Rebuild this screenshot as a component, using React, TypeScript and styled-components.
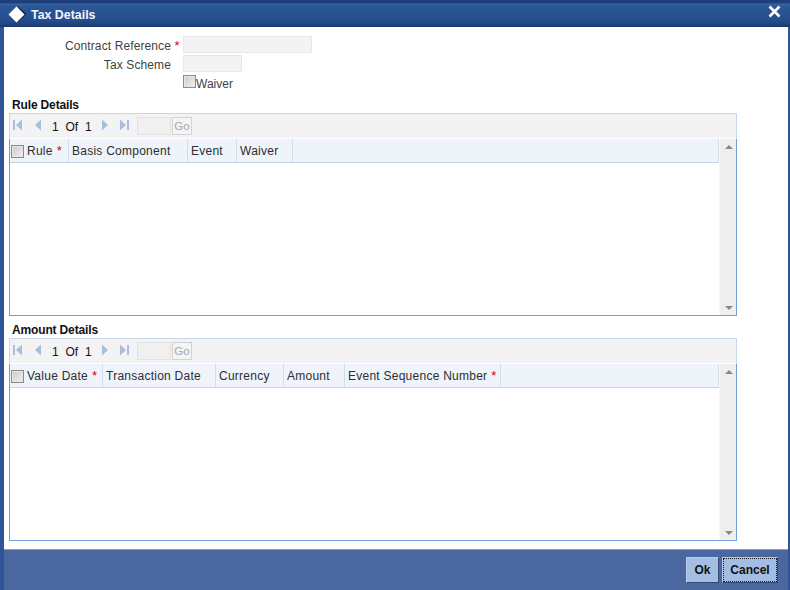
import React from "react";
import styled, { createGlobalStyle } from "styled-components";

const Global = createGlobalStyle`
  html, body { margin: 0; padding: 0; background: #fff; }
  body { font-family: "Liberation Sans", Arial, sans-serif; font-size: 12px; color: #333; }
  * { box-sizing: border-box; }
`;

const Window = styled.div`
  width: 790px;
  height: 590px;
  display: flex;
  flex-direction: column;
  background: #2f5597;
  overflow: hidden;
`;
const TitleBar = styled.div`
  height: 27px;
  flex: none;
  display: flex;
  align-items: center;
  padding: 2px 9px 0 8px;
  background: linear-gradient(#1f3f7c 0, #1f3f7c 3px, #3a66a6 4px, #2c5797 6px, #254d8d 20px, #1d3f78 26px, #16315f 27px);
  color: #fff;
`;
const Title = styled.span`
  font-size: 12.4px;
  font-weight: bold;
  margin-left: 4px;
  color: #f2f5fb;
`;
const Close = styled.svg`
  margin-left: auto;
  width: 13px;
  height: 13px;
  margin-top: -6px;
`;
const Body = styled.div`
  flex: 1;
  margin: 0 2px 0 4px;
  background: #fff;
  display: flex;
  flex-direction: column;
  padding-left: 5px;
`;
const Form = styled.div`
  display: grid;
  grid-template-columns: 162px 12px auto;
  grid-auto-rows: 19px;
  padding-top: 9px;
  height: 70px;
  justify-content: start;
`;
const FieldLabel = styled.label`
  text-align: right;
  line-height: 20px;
  color: #3f3f3f;
  letter-spacing: 0.11px;
`;
const Star = styled.span`
  color: #e00000;
  font-size: 13px;
  line-height: 20px;
  text-align: center;
`;
const TextBox = styled.div<{ $w: number }>`
  width: ${(p) => p.$w}px;
  height: 17px;
  background: #f3f3f3;
  border: 1px solid #e8e8e8;
`;
const WaiverWrap = styled.div`
  grid-column: 3;
  display: flex;
  align-items: flex-start;
  height: 19px;
  padding-top: 1px;
`;
const Check = styled.span`
  display: block;
  flex: none;
  width: 13px;
  height: 13px;
  border: 1px solid #8b8b8b;
  background: linear-gradient(135deg, #c9c9c9, #f2f2f2);
  box-shadow: inset 0 0 0 1px #e6e6e6;
`;
const WaiverText = styled.span`
  line-height: 17px;
  margin-top: 1px;
  color: #3f3f3f;
`;
const SectionTitle = styled.div<{ $gap: number }>`
  height: 14px;
  margin-top: ${(p) => p.$gap}px;
  line-height: 16px;
  padding-left: 3px;
  font-weight: bold;
  letter-spacing: -0.15px;
  color: #111;
`;
const Panel = styled.div`
  width: 728px;
  height: 203px;
  margin-top: 2px;
  flex: none;
  display: flex;
  flex-direction: column;
  border: 1px solid #6f9fd8;
  border-top: 0;
`;
const Toolbar = styled.div`
  height: 26px;
  flex: none;
  margin-left: -1px;
  width: 728px;
  display: flex;
  align-items: center;
  background: #f3f3f3;
  border: 1px solid #c8d6e6;
  border-bottom: 1px solid #fff;
  padding-left: 2px;
`;
const Pager = styled.span`
  font-size: 12px;
  line-height: 16px;
  padding-top: 1px;
  color: #111;
  width: 42px;
  margin-left: 8px;
  margin-right: 6px;
  word-spacing: 3.5px;
  white-space: nowrap;
`;
const NavIcon = styled.svg<{ $ml?: number }>`
  width: 11px;
  height: 12px;
  flex: none;
  margin-left: ${(p) => p.$ml ?? 0}px;
  margin-top: -2px;
`;
const PageBox = styled.div`
  width: 34px;
  height: 18px;
  margin-left: 7px;
  background: #f0f0f0;
  border: 1px solid #e2e2e2;
`;
const GoButton = styled.div`
  width: 20px;
  height: 18px;
  margin-left: 1px;
  border: 1px solid #d2d2d2;
  background: #f4f4f4;
  color: #a8a8a8;
  font-size: 11.5px;
  line-height: 16px;
  text-align: center;
`;
const TableArea = styled.div`
  flex: 1;
  display: flex;
  min-height: 0;
`;
const Grid = styled.div`
  flex: 1;
  min-width: 0;
`;
const HeadRow = styled.div`
  height: 24px;
  display: flex;
  align-items: stretch;
  background: #eff3fa;
  border-bottom: 1px solid #c8d3e3;
  border-right: 1px solid #d5deeb;
`;
const CheckCell = styled.div`
  width: 14px;
  flex: none;
  display: flex;
  align-items: center;
  padding-left: 1px;
  padding-top: 1px;
`;
const HeadCell = styled.div<{ $w: number }>`
  width: ${(p) => p.$w}px;
  flex: none;
  padding-left: 3px;
  line-height: 25px;
  white-space: nowrap;
  color: #2e2e2e;
  letter-spacing: 0.25px;
  border-right: 1px solid #d3dcea;
`;
const HeadStar = styled.span`
  color: #e00000;
  font-size: 13px;
  line-height: 1;
  margin-left: 4px;
`;
const ScrollBar = styled.div`
  width: 17px;
  flex: none;
  display: flex;
  flex-direction: column;
  justify-content: space-between;
  align-items: center;
  padding: 6px 0 5px 1px;
  background: #efefef;
  border-left: 1px solid #f8f8f8;
`;
const Arrow = styled.span<{ $down?: boolean }>`
  display: block;
  width: 0;
  height: 0;
  border-left: 4px solid transparent;
  border-right: 4px solid transparent;
  ${(p) => (p.$down ? "border-top: 4px solid #888;" : "border-bottom: 4px solid #888;")}
`;
const Footer = styled.div`
  height: 41px;
  flex: none;
  margin-left: 4px;
  margin-right: 2px;
  display: flex;
  justify-content: flex-end;
  align-items: flex-start;
  gap: 3px;
  padding: 7px 10px 0 0;
  background: #4a689f;
  border-top: 1px solid #8a9dc0;
`;
const Button = styled.div<{ $w: number; $focus?: boolean }>`
  width: ${(p) => p.$w}px;
  height: 26px;
  background: #a3bde3;
  border: 1px solid;
  border-color: #b9cdea #2f4a78 #2f4a78 #b9cdea;
  color: #111;
  font-weight: bold;
  font-size: 12px;
  display: flex;
  align-items: center;
  justify-content: center;
  ${(p) => (p.$focus ? "outline: 1px dotted #1a1a1a; outline-offset: -2px;" : "")}
`;

const navColor = "#a9bedd";
const First = () => (
  <NavIcon viewBox="0 0 11 12">
    <rect x="1" y="1" width="2" height="10" fill={navColor} />
    <path d="M10 0.5V11.5L4 6Z" fill={navColor} />
  </NavIcon>
);
const Prev = () => (
  <NavIcon $ml={10} viewBox="0 0 11 12">
    <path d="M8 0.5V11.5L2 6Z" fill={navColor} />
  </NavIcon>
);
const Next = () => (
  <NavIcon viewBox="0 0 11 12">
    <path d="M2 0.5V11.5L8 6Z" fill={navColor} />
  </NavIcon>
);
const Last = () => (
  <NavIcon $ml={8} viewBox="0 0 11 12">
    <path d="M1 0.5V11.5L7 6Z" fill={navColor} />
    <rect x="8" y="1" width="2" height="10" fill={navColor} />
  </NavIcon>
);

type Col = { label: string; w: number; req?: boolean };

const TablePanel = ({ cols }: { cols: Col[] }) => (
  <Panel>
    <Toolbar>
      <First />
      <Prev />
      <Pager>1 Of 1</Pager>
      <Next />
      <Last />
      <PageBox />
      <GoButton>Go</GoButton>
    </Toolbar>
    <TableArea>
      <Grid>
        <HeadRow>
          <CheckCell>
            <Check />
          </CheckCell>
          {cols.map((c) => (
            <HeadCell key={c.label} $w={c.w}>
              {c.label}
              {c.req && <HeadStar>*</HeadStar>}
            </HeadCell>
          ))}
        </HeadRow>
      </Grid>
      <ScrollBar>
        <Arrow />
        <Arrow $down />
      </ScrollBar>
    </TableArea>
  </Panel>
);

const ruleCols: Col[] = [
  { label: "Rule", w: 45, req: true },
  { label: "Basis Component", w: 119 },
  { label: "Event", w: 49 },
  { label: "Waiver", w: 56 },
];
const amountCols: Col[] = [
  { label: "Value Date", w: 79, req: true },
  { label: "Transaction Date", w: 113 },
  { label: "Currency", w: 68 },
  { label: "Amount", w: 61 },
  { label: "Event Sequence Number", w: 156, req: true },
];

export default function App() {
  return (
    <Window>
      <Global />
      <TitleBar>
        <svg width="19" height="17" viewBox="0 0 19 17">
          <path d="M10 0.5L18.5 8L10 16Z" fill="#10294f" />
          <path d="M8.5 0.5L16.5 8.5L8.5 16.5L0.5 8.5Z" fill="#fff" />
        </svg>
        <Title>Tax Details</Title>
        <Close viewBox="0 0 13 13">
          <path d="M1.5 1.5L11.5 11.5M11.5 1.5L1.5 11.5" stroke="#fff" strokeWidth="2.6" />
        </Close>
      </TitleBar>
      <Body>
        <Form>
          <FieldLabel>Contract Reference</FieldLabel>
          <Star>*</Star>
          <TextBox $w={129} />
          <FieldLabel>Tax Scheme</FieldLabel>
          <span />
          <TextBox $w={59} />
          <WaiverWrap>
            <Check />
            <WaiverText>Waiver</WaiverText>
          </WaiverWrap>
        </Form>
        <SectionTitle $gap={0}>Rule Details</SectionTitle>
        <TablePanel cols={ruleCols} />
        <SectionTitle $gap={6}>Amount Details</SectionTitle>
        <TablePanel cols={amountCols} />
      </Body>
      <Footer>
        <Button $w={33}>Ok</Button>
        <Button $w={56} $focus>
          Cancel
        </Button>
      </Footer>
    </Window>
  );
}
